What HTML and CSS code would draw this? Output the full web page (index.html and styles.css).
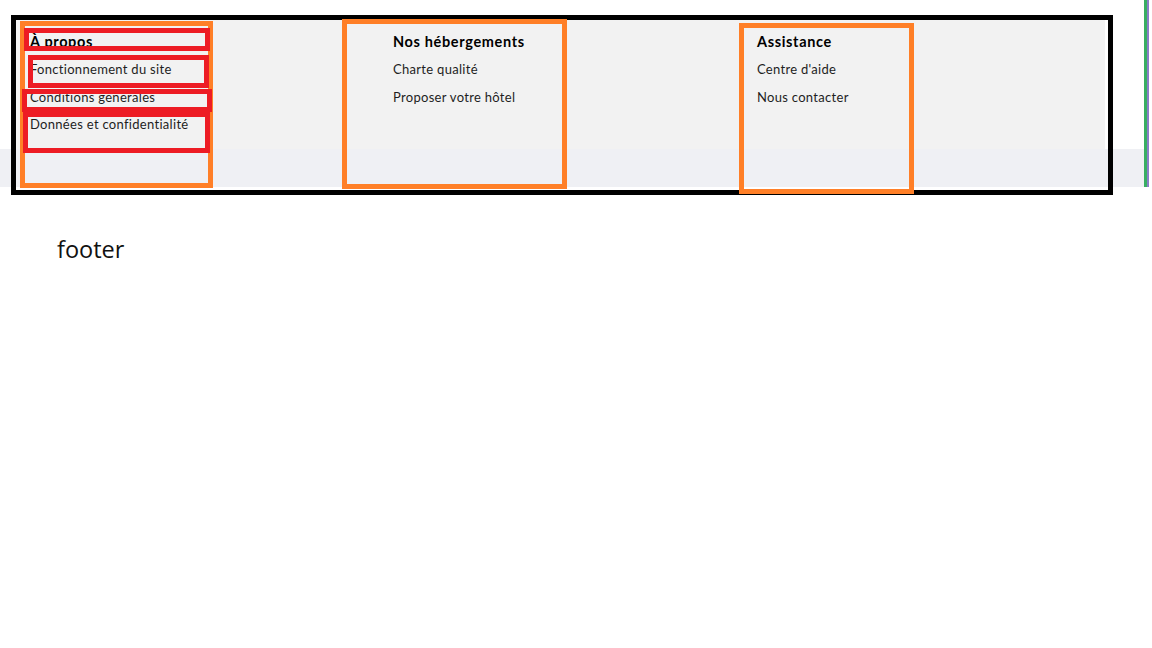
FILE: index.html
```html
<!DOCTYPE html>
<html lang="fr">
<head>
<meta charset="utf-8">
<title>footer</title>
<link rel="stylesheet" href="styles.css">
</head>
<body>
<div class="screen">
  <div class="page">
    <div class="top">
      <div class="panel">
        <div class="col">
          <h3 class="col-title">À propos</h3>
          <a class="col-link" href="#">Fonctionnement du site</a>
          <a class="col-link" href="#">Conditions générales</a>
          <a class="col-link" href="#">Données et confidentialité</a>
        </div>
        <div class="col">
          <h3 class="col-title">Nos hébergements</h3>
          <a class="col-link" href="#">Charte qualité</a>
          <a class="col-link" href="#">Proposer votre hôtel</a>
        </div>
        <div class="col">
          <h3 class="col-title">Assistance</h3>
          <a class="col-link" href="#">Centre d'aide</a>
          <a class="col-link" href="#">Nous contacter</a>
        </div>
      </div>
    </div>
    <div class="band"></div>
  </div>
  <div class="scroll-edge"></div>

  <div class="mark mark-black"></div>
  <div class="mark mark-orange o1"></div>
  <div class="mark mark-orange o2"></div>
  <div class="mark mark-orange o3"></div>
  <div class="mark mark-red r1"></div>
  <div class="mark mark-red r2"></div>
  <div class="mark mark-red r3"></div>
  <div class="mark mark-red r4"></div>
</div>
<p class="label">footer</p>
</body>
</html>
```

FILE: styles.css
```css
html, body {
  margin: 0;
  padding: 0;
  background: #ffffff;
}

.screen {
  position: relative;
  display: flex;
  width: 1152px;
  height: 187px;
}

.page {
  width: 1144px;
  display: flex;
  flex-direction: column;
}

.top {
  height: 149px;
  padding: 19px 0 0 15px;
  box-sizing: border-box;
}

.panel {
  width: 1090px;
  height: 130px;
  background: #f2f2f2;
  box-sizing: border-box;
  padding: 9px 0 0 15px;
  display: grid;
  grid-template-columns: 363px 364px 300px;
  font-family: Lato, "Noto Sans", sans-serif;
  font-size: 13px;
  line-height: 28px;
}

.col {
  display: flex;
  flex-direction: column;
}

.col-title {
  margin: 0;
  font-size: 14.5px;
  font-weight: 700;
  letter-spacing: 0.65px;
  color: #000;
  line-height: 28px;
}

.col-link {
  color: #1e1e1e;
  text-decoration: none;
  letter-spacing: 0.3px;
  line-height: 27.7px;
}

.band {
  height: 38px;
  background: #eff0f4;
}

.scroll-edge {
  width: 5px;
  height: 187px;
  background: linear-gradient(to right, #38ae62 0, #38ae62 3px, #8a7cc8 3px, #8a7cc8 5px);
}

.mark {
  position: absolute;
  box-sizing: border-box;
  pointer-events: none;
}

.mark-black {
  left: 11px;
  top: 15px;
  width: 1102px;
  height: 180px;
  border: 5px solid #000;
}

.mark-orange {
  border: 5px solid #ff7f27;
}

.o1 { left: 20px;  top: 21px; width: 193px; height: 167px; }
.o2 { left: 342px; top: 19px; width: 225px; height: 170px; }
.o3 { left: 739px; top: 23px; width: 175px; height: 171px; }

.mark-red {
  border: 5px solid #ed1c24;
}

.r1 { left: 24px; top: 28px;  width: 186px; height: 23px; }
.r2 { left: 28px; top: 55px;  width: 181px; height: 33px; }
.r3 { left: 22px; top: 89px;  width: 190px; height: 23px; }
.r4 { left: 23px; top: 112px; width: 187px; height: 41px; }

.label {
  margin: 46px 0 0 57px;
  font-family: "Open Sans", sans-serif;
  font-size: 23.5px;
  line-height: 32px;
  color: #111;
}
```
